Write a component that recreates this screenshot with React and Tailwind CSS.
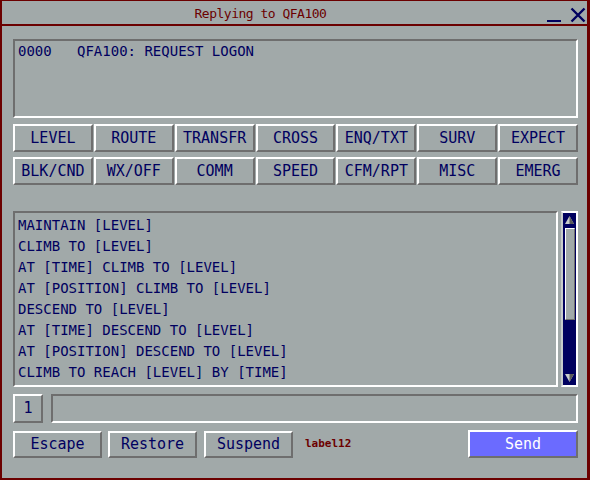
import React from "react";

const mono = { fontFamily: '"DejaVu Sans Mono", "Liberation Mono", monospace' };

const raised =
  "border-2 border-t-white border-l-white border-b-[#6e6e6e] border-r-[#6e6e6e]";
const sunken =
  "border-2 border-t-[#6e6e6e] border-l-[#6e6e6e] border-b-white border-r-white";

const row1 = ["LEVEL", "ROUTE", "TRANSFR", "CROSS", "ENQ/TXT", "SURV", "EXPECT"];
const row2 = ["BLK/CND", "WX/OFF", "COMM", "SPEED", "CFM/RPT", "MISC", "EMERG"];

const items = [
  "MAINTAIN [LEVEL]",
  "CLIMB TO [LEVEL]",
  "AT [TIME] CLIMB TO [LEVEL]",
  "AT [POSITION] CLIMB TO [LEVEL]",
  "DESCEND TO [LEVEL]",
  "AT [TIME] DESCEND TO [LEVEL]",
  "AT [POSITION] DESCEND TO [LEVEL]",
  "CLIMB TO REACH [LEVEL] BY [TIME]",
];

const Btn = ({ children, className = "" }) => (
  <div
    className={`${raised} flex items-center justify-center text-[15px] text-[#00005f] leading-none ${className}`}
  >
    {children}
  </div>
);

const Arrow = ({ down }) => (
  <svg width="11" height="10" viewBox="0 0 11 10" className="mx-auto">
    {down ? (
      <>
        <polygon points="1,1 10,1 5.5,9" fill="#c8cccc" />
        <polygon points="5.5,1 10,1 5.5,9" fill="#5a5a5a" />
      </>
    ) : (
      <>
        <polygon points="5.5,1 10,9 1,9" fill="#c8cccc" />
        <polygon points="5.5,1 10,9 5.5,9" fill="#5a5a5a" />
      </>
    )}
  </svg>
);

export default function App() {
  return (
    <div
      className="w-[590px] h-[480px] bg-[#a1a9a9] border-[#6b0000] border-t-[1px] border-l-2 border-r-[3px] border-b-2 flex flex-col"
      style={mono}
    >
      {/* title bar */}
      <div className="h-[25px] flex items-center border-b-2 border-[#6b0000] shrink-0">
        <div className="flex-1 flex justify-center pr-[28px] pt-[2px] text-[13px] tracking-[-0.5px] text-[#6b0000]">
          Replying to QFA100
        </div>
        <div className="flex items-end gap-[8px] pr-[1px] pt-[4px]">
          <svg width="15" height="16" viewBox="0 0 15 16">
            <rect x="0" y="13" width="14" height="2" fill="#00005f" />
          </svg>
          <svg width="16" height="16" viewBox="0 0 16 16">
            <path d="M1.5 1.5 L14.5 14.5 M14.5 1.5 L1.5 14.5" stroke="#00005f" strokeWidth="2.4" />
          </svg>
        </div>
      </div>

      <div className="flex flex-col pl-[11px] pr-[9px] pt-[13px]">
        {/* message box */}
        <div className={`${sunken} h-[79px] pl-[3px] pt-[2px] text-[14px] leading-[16px] text-[#00005f] whitespace-pre`}>
          {"0000   QFA100: REQUEST LOGON"}
        </div>

        {/* button rows */}
        <div className="grid grid-cols-7 gap-x-[1px] mt-[6px]">
          {row1.map((b) => (
            <Btn key={b} className="h-[28px]">
              {b}
            </Btn>
          ))}
        </div>
        <div className="grid grid-cols-7 gap-x-[1px] mt-[5px]">
          {row2.map((b) => (
            <Btn key={b} className="h-[28px]">
              {b}
            </Btn>
          ))}
        </div>

        {/* list + scrollbar */}
        <div className="flex gap-[3px] mt-[26px] h-[176px]">
          <div className={`${sunken} flex-1 pl-[3px] pt-[2px] text-[14px] leading-[21px] text-[#00005f] whitespace-pre`}>
            {items.map((t) => (
              <div key={t}>{t}</div>
            ))}
          </div>
          <div className="w-[17px] bg-[#00005f] border-2 border-white border-l-[#c8cccc] flex flex-col py-[2px]">
            <Arrow />
            <div className="mx-auto mt-[3px] w-[10px] h-[92px] border-[1.5px] border-t-white border-l-white border-b-[#6e6e6e] border-r-[#6e6e6e] bg-[#a1a9a9]" />
            <div className="flex-1" />
            <Arrow down />
          </div>
        </div>

        {/* page row */}
        <div className="flex gap-[8px] mt-[7px] h-[29px]">
          <Btn className="w-[30px]">1</Btn>
          <div className={`${sunken} flex-1`} />
        </div>

        {/* bottom row */}
        <div className="flex items-center mt-[7px] h-[28px]">
          <Btn className="w-[89px] h-[27px]">Escape</Btn>
          <Btn className="w-[89px] h-[27px] ml-[6px]">Restore</Btn>
          <Btn className="w-[89px] h-[27px] ml-[7px]">Suspend</Btn>
          <div className="ml-[12px] text-[11px] font-bold text-[#6b0000]">label12</div>
          <div className="flex-1" />
          <Btn className="w-[110px] h-[28px] !bg-[#6b6bff] !text-white">Send</Btn>
        </div>
      </div>
    </div>
  );
}
